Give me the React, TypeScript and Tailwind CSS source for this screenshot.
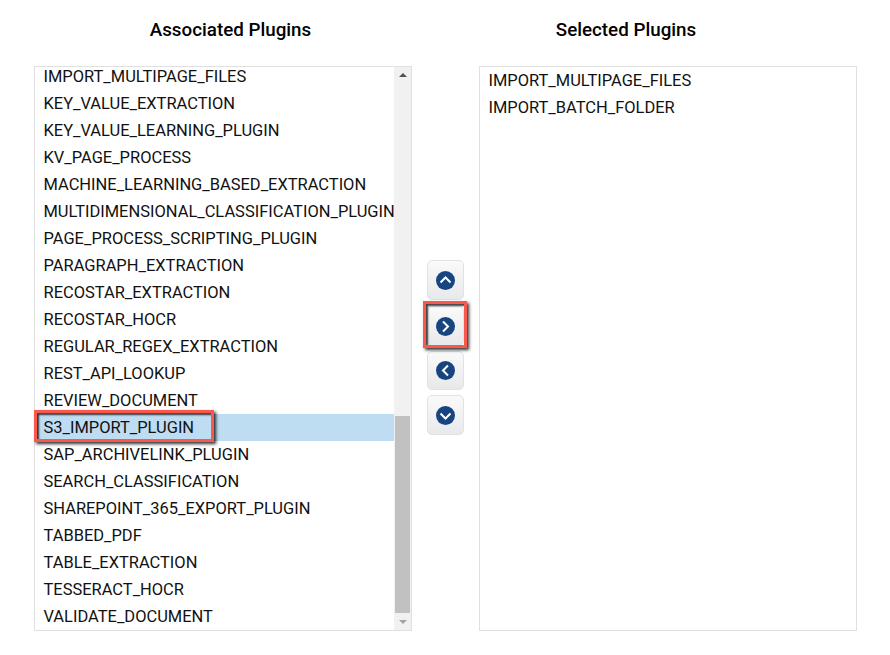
const associated = [
  "IMPORT_MULTIPAGE_FILES",
  "KEY_VALUE_EXTRACTION",
  "KEY_VALUE_LEARNING_PLUGIN",
  "KV_PAGE_PROCESS",
  "MACHINE_LEARNING_BASED_EXTRACTION",
  "MULTIDIMENSIONAL_CLASSIFICATION_PLUGIN",
  "PAGE_PROCESS_SCRIPTING_PLUGIN",
  "PARAGRAPH_EXTRACTION",
  "RECOSTAR_EXTRACTION",
  "RECOSTAR_HOCR",
  "REGULAR_REGEX_EXTRACTION",
  "REST_API_LOOKUP",
  "REVIEW_DOCUMENT",
  "S3_IMPORT_PLUGIN",
  "SAP_ARCHIVELINK_PLUGIN",
  "SEARCH_CLASSIFICATION",
  "SHAREPOINT_365_EXPORT_PLUGIN",
  "TABBED_PDF",
  "TABLE_EXTRACTION",
  "TESSERACT_HOCR",
  "VALIDATE_DOCUMENT",
];

const selected = ["IMPORT_MULTIPAGE_FILES", "IMPORT_BATCH_FOLDER"];

const CHEVRONS = {
  up: "M4.5 11.5 L9.5 6.5 L14.5 11.5",
  right: "M7 4.5 L12 9.5 L7 14.5",
  left: "M12 4.5 L7 9.5 L12 14.5",
  down: "M4.5 7.5 L9.5 12.5 L14.5 7.5",
};

function MoveButton({ dir, className }: { dir: keyof typeof CHEVRONS; className: string }) {
  return (
    <button className={`relative w-[37px] flex items-center justify-center rounded-[5px] border border-[#e2e2e2] bg-gradient-to-b from-[#fafafa] to-[#e8e9eb] ${className}`}>
      <svg width="19" height="19" viewBox="0 0 19 19">
        <circle cx="9.5" cy="9.5" r="9.5" fill="#17457f" />
        <path d={CHEVRONS[dir]} fill="none" stroke="#fff" strokeWidth="2" />
      </svg>
    </button>
  );
}

export default function App() {
  return (
    <div className="w-[890px] h-[655px] bg-white flex pl-[34px] pt-[66px] relative text-[16.47px] text-[#111111] font-['Roboto',sans-serif] overflow-hidden">
      <div className="relative w-[378px] h-[565px]">
        <h2 className="absolute left-0 w-[393px] -top-[48px] text-center text-[18.8px] leading-[24px] font-medium text-black">
          Associated Plugins
        </h2>
        <div className="h-full border border-[#e0e0e0] overflow-hidden flex">
          <div className="flex-1 min-w-0 -mt-[4px]">
            {associated.map((name) => (
              <div
                key={name}
                className={`h-[27px] leading-[27px] pl-[8.5px] whitespace-nowrap ${name === "S3_IMPORT_PLUGIN" ? "bg-[#bedcf2]" : ""}`}
              >
                {name}
              </div>
            ))}
          </div>
          <div className="w-[17px] shrink-0 bg-[#f1f1f1] flex flex-col items-center">
            <div className="mt-[6px] w-0 h-0 border-x-[4px] border-x-transparent border-b-[4px] border-b-[#505050]" />
            <div className="mt-[339px] w-[15px] h-[197px] bg-[#c1c1c1]" />
            <div className="mt-[7px] w-0 h-0 border-x-[4px] border-x-transparent border-t-[4px] border-t-[#a3a3a3]" />
          </div>
        </div>
        {/* annotation */}
        <div className="absolute left-0 top-[344px] w-[180px] h-[32px] border-[3px] border-[#f9584c] shadow-[2px_2px_3px_rgba(0,0,0,0.8),inset_2px_2px_2px_rgba(0,0,0,0.75)]" />
      </div>

      <div className="w-[67px] shrink-0 flex flex-col items-center pt-[194px]">
        <MoveButton dir="up" className="h-[40px]" />
        <MoveButton dir="right" className="h-[40px] mt-[6px]" />
        <MoveButton dir="left" className="h-[39px] mt-[5px]" />
        <MoveButton dir="down" className="h-[40px] mt-[5px]" />
      </div>

      <div className="relative w-[378px] h-[565px]">
        <h2 className="absolute left-0 w-[294px] -top-[48px] text-center text-[18.8px] leading-[24px] font-medium text-black">
          Selected Plugins
        </h2>
        <div className="h-full border border-[#e0e0e0]">
          {selected.map((name) => (
            <div key={name} className="h-[27px] leading-[27px] pl-[8.5px] whitespace-nowrap">
              {name}
            </div>
          ))}
        </div>
      </div>

      {/* annotation */}
      <div className="absolute left-[423px] top-[301px] w-[44px] h-[47px] border-[3px] border-[#f9584c] shadow-[2px_2px_3px_rgba(0,0,0,0.8),inset_2px_2px_2px_rgba(0,0,0,0.75)]" />
    </div>
  );
}
